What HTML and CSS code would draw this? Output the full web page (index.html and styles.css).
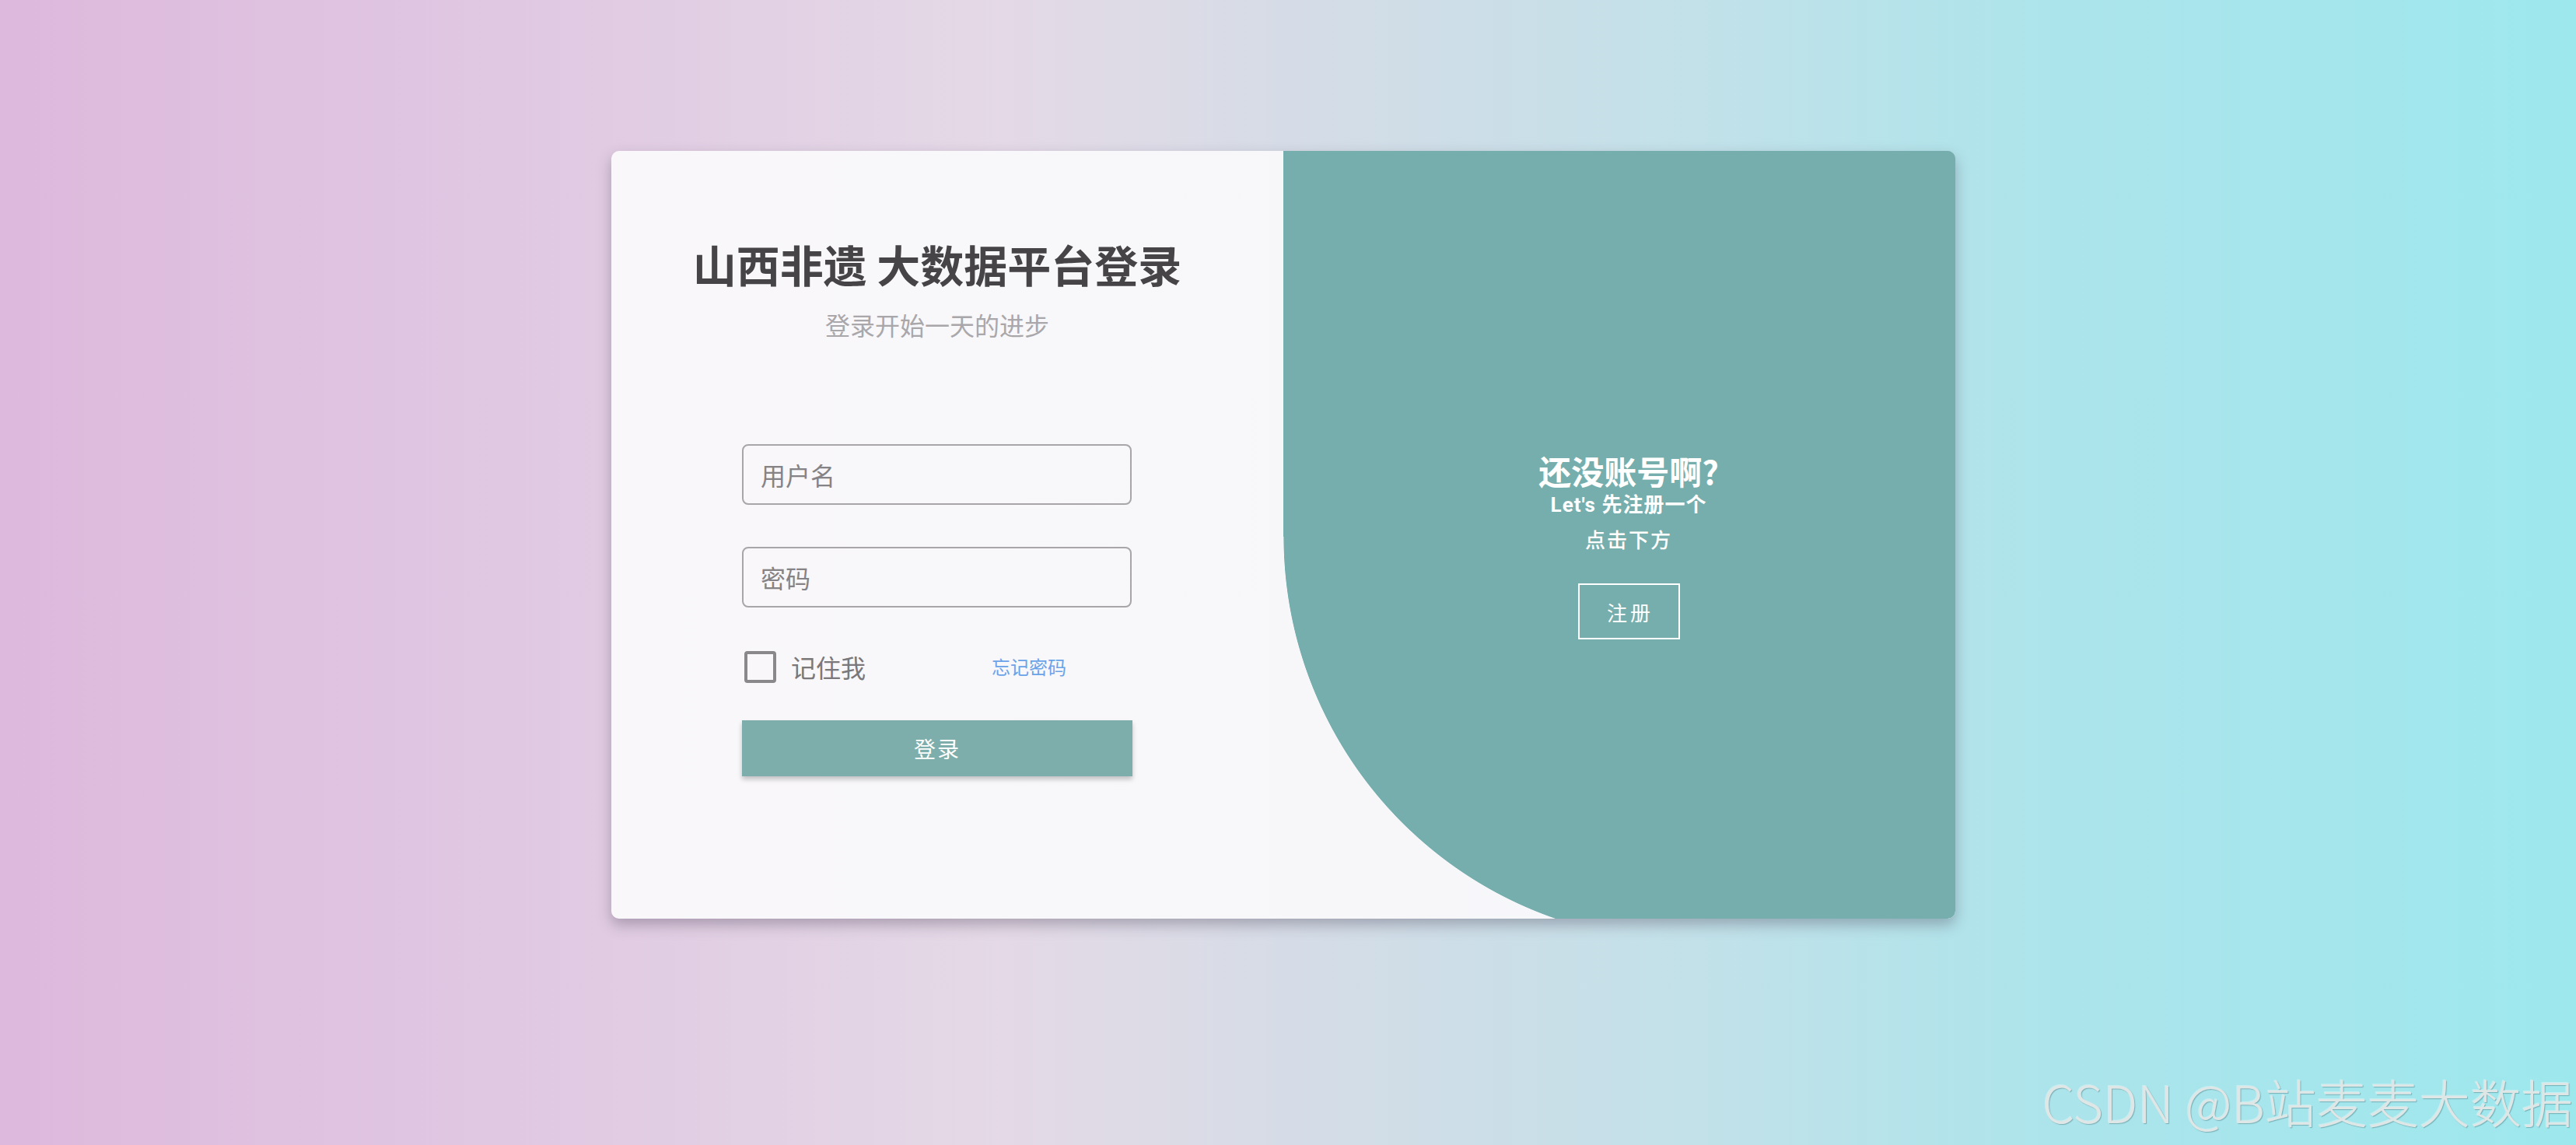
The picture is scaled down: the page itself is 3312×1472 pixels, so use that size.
FILE: index.html
```html
<!DOCTYPE html>
<html lang="zh-CN">
<head>
<meta charset="utf-8">
<title>山西非遗 大数据平台登录</title>
<link rel="stylesheet" href="styles.css">
</head>
<body>
<div class="page">
  <div class="card">
    <div class="login-side">
      <h1 class="login-title">山西非遗 大数据平台登录</h1>
      <p class="login-sub">登录开始一天的进步</p>
      <form class="login-form">
        <input class="field" type="text" placeholder="用户名">
        <input class="field field-pass" type="password" placeholder="密码">
        <div class="remember-row">
          <label class="remember">
            <input class="remember-box" type="checkbox">
            <span class="remember-text">记住我</span>
          </label>
          <a class="forgot" href="#">忘记密码</a>
        </div>
        <button class="login-btn" type="button">登录</button>
      </form>
    </div>
    <div class="register-side">
      <h2 class="reg-title">还没账号啊?</h2>
      <p class="reg-line reg-line-1">Let's 先注册一个</p>
      <p class="reg-line reg-line-2">点击下方</p>
      <button class="reg-btn" type="button">注册</button>
    </div>
  </div>
</div>
<div class="watermark">CSDN @B站麦麦大数据</div>
</body>
</html>
```
FILE: styles.css
```css
html, body {
  margin: 0;
  padding: 0;
}

body {
  height: 1472px;
  overflow: hidden;
  font-family: "Noto Sans CJK SC", "Noto Sans", sans-serif;
  background: linear-gradient(90deg, #ddb9dd 0%, #e0c8e2 20%, #e4d9e6 39%, #dcdbe6 45%, #cfdde7 55%, #c2e1e9 66%, #ace4eb 80%, #9de8ed 100%);
}

.page {
  display: flex;
  justify-content: center;
  padding-top: 194px;
  padding-right: 12px;
}

.card {
  width: 1728px;
  height: 987px;
  display: grid;
  grid-template-columns: 864px 864px;
  border-radius: 10px;
  overflow: hidden;
  box-shadow: 0 8px 18px rgba(70, 60, 80, 0.35);
  background: linear-gradient(90deg, #f9f7fa 0%, #f7f7fa 60%, #f5f8fa 100%);
}

/* ---------- left: login ---------- */
.login-side {
  display: flex;
  flex-direction: column;
  align-items: center;
  padding-top: 111px;
  padding-right: 26px;
}

.login-title {
  margin: 0;
  font-size: 56px;
  line-height: 1.2;
  font-weight: 700;
  color: #464446;
}

.login-sub {
  margin: 26px 0 0;
  font-size: 32px;
  line-height: 1.2;
  color: #a9a7aa;
}

.login-form {
  display: flex;
  flex-direction: column;
  width: 502px;
  margin-top: 134px;
}

.field {
  box-sizing: border-box;
  width: 501px;
  height: 78px;
  margin: 0;
  padding: 0 22px;
  border: 2px solid #a8a6a9;
  border-radius: 8px;
  background: transparent;
  font-family: "Noto Sans CJK SC", sans-serif;
  font-size: 32px;
  color: #555;
  outline: none;
}

.field::placeholder {
  color: #858385;
}

.field-pass {
  margin-top: 54px;
}

.remember-row {
  display: flex;
  align-items: center;
  height: 41px;
  margin-top: 56px;
  padding-left: 3px;
}

.remember {
  display: flex;
  align-items: center;
}

.remember-box {
  appearance: none;
  -webkit-appearance: none;
  box-sizing: border-box;
  width: 41px;
  height: 41px;
  margin: 0;
  border: 4px solid #8a888a;
  border-radius: 4px;
  background: transparent;
}

.remember-text {
  margin-left: 19px;
  font-size: 32px;
  line-height: 1;
  color: #7a787a;
}

.forgot {
  margin-left: 162px;
  font-size: 24px;
  line-height: 1;
  color: #6aa3e8;
  text-decoration: none;
}

.login-btn {
  width: 502px;
  height: 72px;
  margin-top: 48px;
  border: none;
  background: #7daeab;
  color: #ffffff;
  font-family: "Noto Sans CJK SC", sans-serif;
  font-size: 28px;
  letter-spacing: 2px;
  box-shadow: 0 4px 6px rgba(0, 0, 0, 0.22);
}

/* ---------- right: register ---------- */
.register-side {
  display: flex;
  flex-direction: column;
  align-items: center;
  padding-top: 388px;
  padding-left: 24px;
  color: #ffffff;
  background:
    linear-gradient(#76aead, #76aead) right top / calc(100% - 520px) 100% no-repeat,
    linear-gradient(#76aead, #76aead) left top / 100% 496px no-repeat,
    radial-gradient(circle 520px at 520px 496px, #76aead 519.2px, rgba(118, 174, 173, 0) 520px) no-repeat;
}

.reg-title {
  margin: 0;
  font-size: 42px;
  line-height: 1.1;
  font-weight: 700;
}

.reg-line {
  margin: 0;
  font-size: 26px;
  line-height: 43px;
  letter-spacing: 1px;
}

.reg-line-1 {
  font-family: Roboto, "Noto Sans CJK SC", sans-serif;
  font-weight: 700;
}

.reg-line-2 {
  font-weight: 500;
  letter-spacing: 2px;
}

.reg-btn {
  box-sizing: border-box;
  width: 131px;
  height: 72px;
  margin-top: 36px;
  border: 2px solid #ffffff;
  background: transparent;
  color: #ffffff;
  font-family: "Noto Sans CJK SC", sans-serif;
  font-size: 26px;
  letter-spacing: 4px;
  padding: 0 0 0 4px;
}

/* ---------- watermark ---------- */
.watermark {
  position: absolute;
  right: 4px;
  bottom: 24px;
  font-family: "Noto Sans CJK SC", sans-serif;
  font-weight: 300;
  font-size: 66px;
  line-height: 1;
  color: #dfe6e6;
  text-shadow: 1px 1px 1px rgba(40, 80, 90, 0.35), -1px -1px 0 rgba(255, 255, 255, 0.35);
  white-space: nowrap;
}
```
